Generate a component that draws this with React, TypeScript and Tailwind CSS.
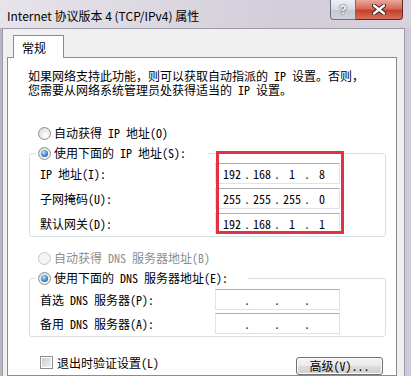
import React from "react";

// SimSun-like: half-width latin, full-width CJK
const sim = "font-['Noto_Sans_Mono_CJK_SC','Noto_Sans_CJK_SC',monospace] text-[12px] leading-[12px]";

const Radio = ({ checked, disabled }: { checked?: boolean; disabled?: boolean }) => (
  <span
    className={
      "w-[13px] h-[13px] rounded-full border flex items-center justify-center shrink-0 " +
      (disabled
        ? "border-[#c6c6c6] bg-[#f4f4f4]"
        : "border-[#8e8f8f] bg-[radial-gradient(circle_at_60%_65%,#ffffff,#d4d4d4)]")
    }
  >
    {checked && (
      <span className="w-[7px] h-[7px] rounded-full bg-[radial-gradient(circle_at_40%_35%,#bfe6fc,#3a86c8_55%,#173d6e)]" />
    )}
  </span>
);

const IpInput = ({ parts }: { parts: string[] }) => (
  <div className={"w-[125px] h-[21px] bg-white border border-[#dfe3e8] border-t-[#abadb3] flex items-center pl-[4px] " + sim}>
    {parts.map((p, i) => (
      <React.Fragment key={i}>
        {i > 0 && <span className="w-[6px] text-center text-[#333]">.</span>}
        <span className="w-[24px] text-center">{p}</span>
      </React.Fragment>
    ))}
  </div>
);

const Row = ({ label, parts }: { label: string; parts: string[] }) => (
  <div className="flex items-center h-[21px]">
    <span className={"w-[175px] " + sim}>{label}</span>
    <IpInput parts={parts} />
  </div>
);

const TitleBar = () => (
  <div className="h-[28px] shrink-0 flex bg-[linear-gradient(90deg,#e6e3ea,#ddd9e2_35%,#d2cdd9_70%,#d8d2df)]">
    <span className="pl-[7px] pt-[3px] self-center text-[12px] text-black font-['Noto_Sans_CJK_SC','Liberation_Sans',sans-serif]">
      Internet 协议版本 4 (TCP/IPv4) 属性
    </span>
    <div className="ml-auto mr-[8px] flex h-[20px]">
      <div className="w-[26px] h-full border border-t-0 border-[#6e7079] rounded-bl-[4px] bg-[linear-gradient(#eef0f5,#d6d9e1_50%,#c3c7d1_51%,#cfd3dc)] flex items-center justify-center">
        <span className="text-[13px] font-bold text-white leading-none font-['Liberation_Sans',sans-serif] [text-shadow:0_0_2px_#3a3f4a,0_0_1px_#3a3f4a]">?</span>
      </div>
      <div className="w-[47px] h-full border border-t-0 border-l-0 border-[#5b2b2b] rounded-br-[4px] bg-[linear-gradient(#e9a89d,#d86a58_45%,#c3402c_55%,#d9705a)] flex items-center justify-center">
        <svg width="14" height="11" viewBox="0 0 14 11">
          <path d="M2 1.5 L12 9.5 M12 1.5 L2 9.5" stroke="#3b1d1d" strokeWidth="4.2" strokeLinecap="round" />
          <path d="M2 1.5 L12 9.5 M12 1.5 L2 9.5" stroke="#ffffff" strokeWidth="2.4" strokeLinecap="round" />
        </svg>
      </div>
    </div>
  </div>
);

export default function App() {
  return (
    <div className="w-[411px] h-[376px] overflow-hidden flex flex-col bg-[#d3cedb] text-black">
      <TitleBar />
      <div className="flex flex-1 min-h-0">
        <div className="w-[2px] bg-[#b9b4c3]" />
        <div className="flex-1 flex flex-col bg-[#f0f0f0] border-l border-t border-r border-[#9b9ba5] pt-[6px] min-h-0">
          {/* tab */}
          <div className="ml-[10px] w-[51px] h-[23px] -mb-[1px] relative z-10 shrink-0 bg-white border border-b-0 border-[#898c95] pl-[8px] pt-[3px] text-[12px] font-['Noto_Sans_CJK_SC',sans-serif]">
            常规
          </div>
          {/* page */}
          <div className="ml-[4px] mr-[7px] flex-1 bg-white border border-[#898c95] flex flex-col">
            <div className="ml-[20px] mt-[11px] font-['Noto_Sans_Mono_CJK_SC','Noto_Sans_CJK_SC',monospace] text-[12px] leading-[14px]">
              <div>如果网络支持此功能，则可以获取自动指派的 IP 设置。否则，</div>
              <div>您需要从网络系统管理员处获得适当的 IP 设置。</div>
            </div>

            <div className="ml-[30px] mt-[26px] h-[20px] flex items-center gap-[3px]">
              <Radio />
              <span className={sim}>自动获得 IP 地址(O)</span>
            </div>

            <fieldset className="ml-[21px] mr-[10px] border border-[#d5dfe5] rounded-[3px] pb-[2px]">
              <legend className="ml-[6px] w-[172px] h-[20px] pl-[2px] flex items-center gap-[3px]">
                <Radio checked />
                <span className={sim}>使用下面的 IP 地址(S):</span>
              </legend>
              <div className="relative flex flex-col gap-[4px] pl-[10px]">
                <Row label="IP 地址(I):" parts={["192", "168", "1", "8"]} />
                <Row label="子网掩码(U):" parts={["255", "255", "255", "0"]} />
                <Row label="默认网关(D):" parts={["192", "168", "1", "1"]} />
                <div className="absolute left-[186px] -top-[12px] w-[128px] h-[83px] border-[3px] border-[#e2323f]" />
              </div>
            </fieldset>

            <div className="ml-[30px] mt-[11px] h-[20px] flex items-center gap-[3px]">
              <Radio disabled />
              <span className={"text-[#8d8d8d] " + sim}>自动获得 DNS 服务器地址(B)</span>
            </div>

            <fieldset className="ml-[21px] mr-[10px] border border-[#d5dfe5] rounded-[3px] pb-[2px]">
              <legend className="ml-[6px] w-[212px] h-[20px] pl-[2px] flex items-center gap-[3px]">
                <Radio checked />
                <span className={sim}>使用下面的 DNS 服务器地址(E):</span>
              </legend>
              <div className="flex flex-col gap-[3px] pl-[10px] pt-[1px]">
                <Row label="首选 DNS 服务器(P):" parts={["", "", "", ""]} />
                <Row label="备用 DNS 服务器(A):" parts={["", "", "", ""]} />
              </div>
            </fieldset>

            <div className="mt-[19px] flex items-start">
              <div className="ml-[32px] h-[13px] flex items-center gap-[4px]">
                <span className="w-[13px] h-[13px] border border-[#8e8f8f] bg-white p-[1px] shrink-0">
                  <span className="block w-full h-full bg-[linear-gradient(135deg,#c9ccd2,#f3f3f3)]" />
                </span>
                <span className={sim}>退出时验证设置(L)</span>
              </div>
              <button className={"ml-auto mr-[13px] mt-[1px] w-[87px] h-[18px] border border-[#707070] rounded-[3px] bg-[linear-gradient(#f2f2f2,#ebebeb_50%,#dddddd_50%,#cfcfcf)] shadow-[inset_0_0_0_1px_#fcfcfc] flex items-center justify-center " + sim}>
                高级(V)...
              </button>
            </div>
          </div>
        </div>
        <div className="w-[6px] bg-[#cfc8dc]" />
      </div>
    </div>
  );
}
